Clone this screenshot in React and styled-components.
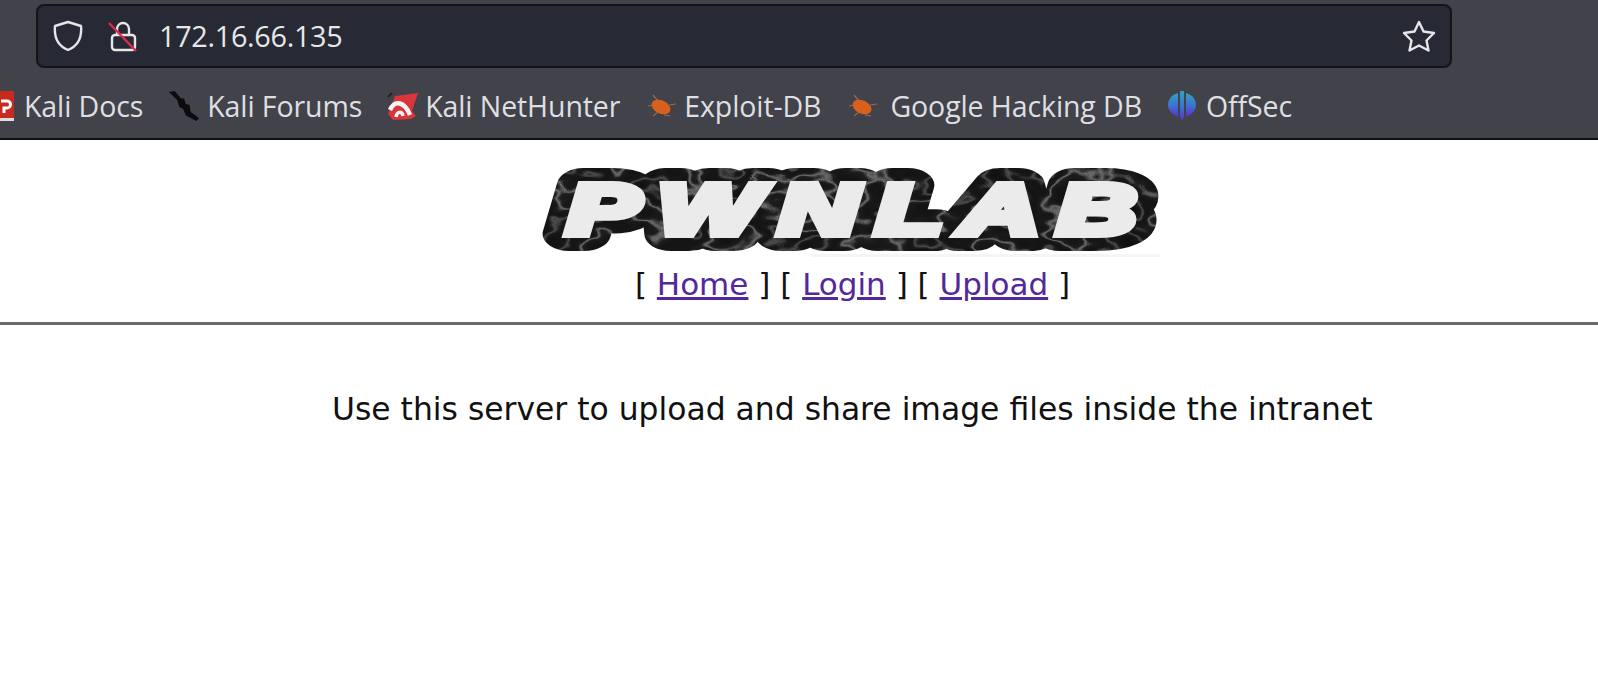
import React from "react";
import styled, { createGlobalStyle } from "styled-components";

const Global = createGlobalStyle`
  html, body { margin: 0; padding: 0; background: #fff; overflow: hidden; }
  #root { width: 1598px; height: 674px; overflow: hidden; }
`;
const Chrome = styled.header`
  height: 140px; box-sizing: border-box; background: #42434a;
  border-bottom: 2px solid #101014; padding-top: 4px;
  font-family: "Open Sans", "Noto Sans", sans-serif; overflow: hidden;
`;
const UrlRow = styled.div`padding: 0 146px 0 36px;`;
const UrlBar = styled.div`
  height: 64px; box-sizing: border-box; display: flex; align-items: center;
  background: #272a34; border: 2px solid #14151b; border-radius: 8px; padding: 0 14px 0 15px;
`;
const IconSlot = styled.span`display: flex; width: ${p => p.$w}px; flex: none;`;
const UrlText = styled.span`
  flex: 1; color: #e6e7e8; font-size: 28.8px; letter-spacing: -0.3px; line-height: 1;
`;
const Bookmarks = styled.nav`
  display: flex; align-items: center; height: 68px; margin: 4px 0 0 -16px; gap: 25px;
`;
const Bookmark = styled.a`
  display: flex; align-items: center; gap: ${p => p.$gap ?? 8}px; color: #dfdfe2; text-decoration: none;
  font-size: 28.5px; letter-spacing: -0.1px; line-height: 1; white-space: nowrap;
`;
const Page = styled.main`background: #fff; color: #111;`;
const Masthead = styled.div`
  display: flex; flex-direction: column; align-items: center; padding: 26px 0 0 107px; height: 182px; box-sizing: border-box;
`;
const Nav = styled.div`
  font-family: "DejaVu Sans", sans-serif; font-size: 31px; line-height: 36px; margin-top: 6px; color: #111;
  a { color: #53299a; text-decoration: underline; }
`;
const Rule = styled.hr`margin: 0; border: 0; height: 3px; background: #6a6a6a;`;
const Intro = styled.p`
  margin: 65px 0 0; padding-left: 332px; font-family: "DejaVu Sans", sans-serif; font-size: 31.4px; line-height: 38px; color: #111; white-space: nowrap;
`;

const Shield = () => (
  <svg width="30" height="32" viewBox="0 0 30 32" fill="none" stroke="#e6e6e8" strokeWidth="2.4">
    <path d="M15 2 L28 6 C29 17 25 26 15 30 C5 26 1 17 2 6 Z" strokeLinejoin="round" />
  </svg>
);
const Lock = () => (
  <svg width="30" height="32" viewBox="0 0 30 32" fill="none">
    <path d="M9 14V9a6 6 0 0 1 12 0v5" stroke="#e6e6e8" strokeWidth="2.4" />
    <rect x="4" y="15" width="23" height="15" rx="3" stroke="#e6e6e8" strokeWidth="2.4" />
    <path d="M1 3 L28 31" stroke="#e22850" strokeWidth="2.4" />
  </svg>
);
const Star = () => (
  <svg width="34" height="32" viewBox="0 0 34 32" fill="none" stroke="#e6e6e8" strokeWidth="2.4" strokeLinejoin="round">
    <path d="M17 2 L21.5 11.5 L32 13 L24.5 20.5 L26.5 30.5 L17 25.5 L7.5 30.5 L9.5 20.5 L2 13 L12.5 11.5 Z" />
  </svg>
);
const DocsIcon = () => (
  <svg width="32" height="32" viewBox="0 0 32 32">
    <rect x="2" y="1" width="28" height="30" fill="#c92a1f" />
    <rect x="2" y="28" width="28" height="3" fill="#ddd" />
    <path d="M17 11h6a3.5 3.5 0 0 1 0 7h-3v5" fill="none" stroke="#fff" strokeWidth="3" />
  </svg>
);
const ForumIcon = () => (
  <svg width="32" height="34" viewBox="0 0 34 34">
    <path d="M1 2 L7 1 L14 9 L17 9 L19 15 L23 16 L24 23 L33 30 L30 33 L19 27 L16 20 L12 18 L10 11 Z" fill="#0b0b0d" />
  </svg>
);
const HunterIcon = () => (
  <svg width="32" height="32" viewBox="0 0 32 32">
    <path d="M8 6 L31 3 L25 21 L29 26 L24 29 L6 30 L1 24 Z" fill="#d9353a" />
    <path d="M3 20 C8 9 18 12 23 25" fill="none" stroke="#f4f4f4" strokeWidth="4.5" />
    <path d="M9 27 C10 21 15 21 16 26" fill="none" stroke="#f4f4f4" strokeWidth="3.5" />
    <path d="M1 7 L5 3" stroke="#222" strokeWidth="2" />
  </svg>
);
const BugIcon = () => (
  <svg width="32" height="30" viewBox="0 0 32 30">
    <path d="M8 4 L13 10 M3 15 L9 14 M8 25 L13 21 M19 24 L25 25 M24 14 L31 13" stroke="#9a6a4c" strokeWidth="1.2" fill="none" />
    <ellipse cx="16" cy="16" rx="10" ry="6.5" transform="rotate(25 16 16)" fill="#d8601f" />
  </svg>
);
const OffSecIcon = () => (
  <svg width="30" height="32" viewBox="0 0 30 32">
    <defs>
      <linearGradient id="offsecFill" x1="0" y1="0" x2="0" y2="1">
        <stop offset="0" stopColor="#2fa3c0" />
        <stop offset="0.55" stopColor="#3f6fd0" />
        <stop offset="1" stopColor="#5a2fd0" />
      </linearGradient>
    </defs>
    <path d="M11 3 C4 5 1 10 1 15 C1 19 4 24 11 27 Z" fill="url(#offsecFill)" />
    <path d="M19 3 C26 5 29 10 29 15 C29 19 26 24 19 27 Z" fill="url(#offsecFill)" />
    <path d="M13 1 H17 V26 L15 31 L13 26 Z" fill="url(#offsecFill)" />
  </svg>
);

const veins = "0.05 0.05 0.06 0.06 0.07 0.08 0.08 0.09 0.1 0.12 0.42 0.11 0.09 0.08 0.1 0.3 0.1 0.08 0.07 0.06 0.06 0.05 0.05 0.05";
const Logo = () => (
  <svg width="626" height="94" viewBox="0 0 626 94">
    <defs>
      <filter id="rock" x="-5%" y="-20%" width="110%" height="140%" colorInterpolationFilters="sRGB">
        <feTurbulence type="fractalNoise" baseFrequency="0.018 0.03" numOctaves="3" seed="7" result="n" />
        <feColorMatrix in="n" type="matrix" values="1 0 0 0 0  1 0 0 0 0  1 0 0 0 0  0 0 0 0 1" result="g" />
        <feComponentTransfer in="g" result="v">
          <feFuncR type="table" tableValues={veins} />
          <feFuncG type="table" tableValues={veins} />
          <feFuncB type="table" tableValues={veins} />
        </feComponentTransfer>
        <feComposite in="v" in2="SourceAlpha" operator="in" />
      </filter>
    </defs>
    <rect x="270" y="88" width="350" height="3" fill="#f5f5f5" />
    <g fontFamily="'Liberation Sans', sans-serif" fontWeight="700" fontStyle="italic" fontSize="70" letterSpacing="12">
      <g filter="url(#rock)">
        <text transform="translate(27 68) scale(1.55 1)" fill="#111" stroke="#111" strokeWidth="34" strokeLinejoin="round">PWNLAB</text>
      </g>
      <text transform="translate(27 68) scale(1.55 1)" fill="#ebebeb" stroke="#ebebeb" strokeWidth="8" strokeLinejoin="miter" strokeMiterlimit="3">PWNLAB</text>
    </g>
  </svg>
);

export default function App() {
  return (
    <>
      <Global />
      <Chrome>
        <UrlRow>
          <UrlBar>
            <IconSlot $w={55}><Shield /></IconSlot>
            <IconSlot $w={51}><Lock /></IconSlot>
            <UrlText>172.16.66.135</UrlText>
            <Star />
          </UrlBar>
        </UrlRow>
        <Bookmarks>
          <Bookmark href="#"><DocsIcon />Kali Docs</Bookmark>
          <Bookmark href="#" $gap={7}><ForumIcon />Kali Forums</Bookmark>
          <Bookmark href="#" $gap={6}><HunterIcon />Kali NetHunter</Bookmark>
          <Bookmark href="#" $gap={7}><BugIcon />Exploit-DB</Bookmark>
          <Bookmark href="#" $gap={12}><BugIcon />Google Hacking DB</Bookmark>
          <Bookmark href="#" $gap={9}><OffSecIcon />OffSec</Bookmark>
        </Bookmarks>
      </Chrome>
      <Page>
        <Masthead>
          <Logo />
          <Nav>[ <a href="#">Home</a> ] [ <a href="#">Login</a> ] [ <a href="#">Upload</a> ]</Nav>
        </Masthead>
        <Rule />
        <Intro>Use this server to upload and share image files inside the intranet</Intro>
      </Page>
    </>
  );
}
